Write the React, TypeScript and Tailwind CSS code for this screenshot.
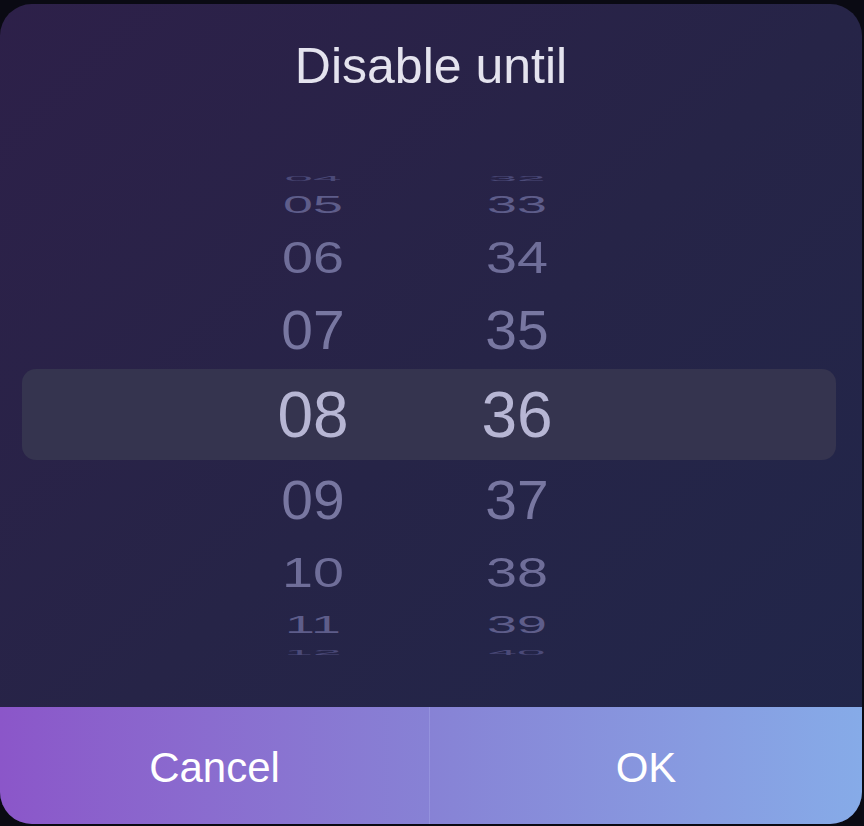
const rows = [
  { h: "04", m: "32", row: "h-[13px]", text: "scale-y-[0.12] scale-x-[0.8] text-[#4b4a78]" },
  { h: "05", m: "33", row: "h-[41px]", text: "scale-y-[0.38] scale-x-[0.84] text-[#5e5d8a]" },
  { h: "06", m: "34", row: "h-[65px]", text: "scale-y-[0.68] scale-x-[0.87] text-[#6f6e99]" },
  { h: "07", m: "35", row: "h-[79px]", text: "scale-y-[0.86] scale-x-[0.89] text-[#7877a1]" },
  { h: "08", m: "36", row: "h-[91px] bg-[#35344f] rounded-[14px]", text: "text-[#b7b6d4]" },
  { h: "09", m: "37", row: "h-[79px]", text: "scale-y-[0.86] scale-x-[0.89] text-[#7877a1]" },
  { h: "10", m: "38", row: "h-[65px]", text: "scale-y-[0.66] scale-x-[0.87] text-[#6f6e99]" },
  { h: "11", m: "39", row: "h-[41px]", text: "scale-y-[0.38] scale-x-[0.84] text-[#5e5d8a]" },
  { h: "12", m: "40", row: "h-[13px]", text: "scale-y-[0.12] scale-x-[0.8] text-[#4b4a78]" },
];

function PickerRow({ h, m, row, text }: { h: string; m: string; row: string; text: string }) {
  return (
    <div className={`ml-[22px] mr-[26px] pr-[28px] flex items-center justify-center gap-[84px] ${row}`}>
      <span className={`w-[120px] text-center text-[64px] leading-none ${text}`}>{h}</span>
      <span className={`w-[120px] text-center text-[64px] leading-none ${text}`}>{m}</span>
    </div>
  );
}

export default function App() {
  return (
    <div className="w-[864px] h-[826px] bg-[#0a0a13] pt-[4px] pr-[2px] font-['Liberation_Sans',Arial,sans-serif]">
      <div className="h-[820px] rounded-[32px] overflow-hidden flex flex-col bg-linear-to-br from-[#2d2049] via-[#262447] to-[#20264a]">
        {/* Title */}
        <h1 className="mt-[37px] h-[50px] text-center text-[50px] leading-none text-[#e4e3ee]">
          Disable until
        </h1>

        {/* Wheel picker */}
        <div className="mt-[80px] flex flex-col">
          {rows.map((r) => (
            <PickerRow key={r.h} {...r} />
          ))}
        </div>

        <div className="flex-1" />

        {/* Actions */}
        <div className="h-[117px] flex bg-linear-to-r from-[#8b56c9] via-[#8782d5] to-[#86abe8]">
          <button className="w-[429px] pt-[4px] text-center text-[42px] leading-none text-white">
            Cancel
          </button>
          <div className="w-px bg-[#9c9ce2]/60" />
          <button className="flex-1 pt-[4px] text-center text-[42px] leading-none text-white">
            OK
          </button>
        </div>
      </div>
    </div>
  );
}
